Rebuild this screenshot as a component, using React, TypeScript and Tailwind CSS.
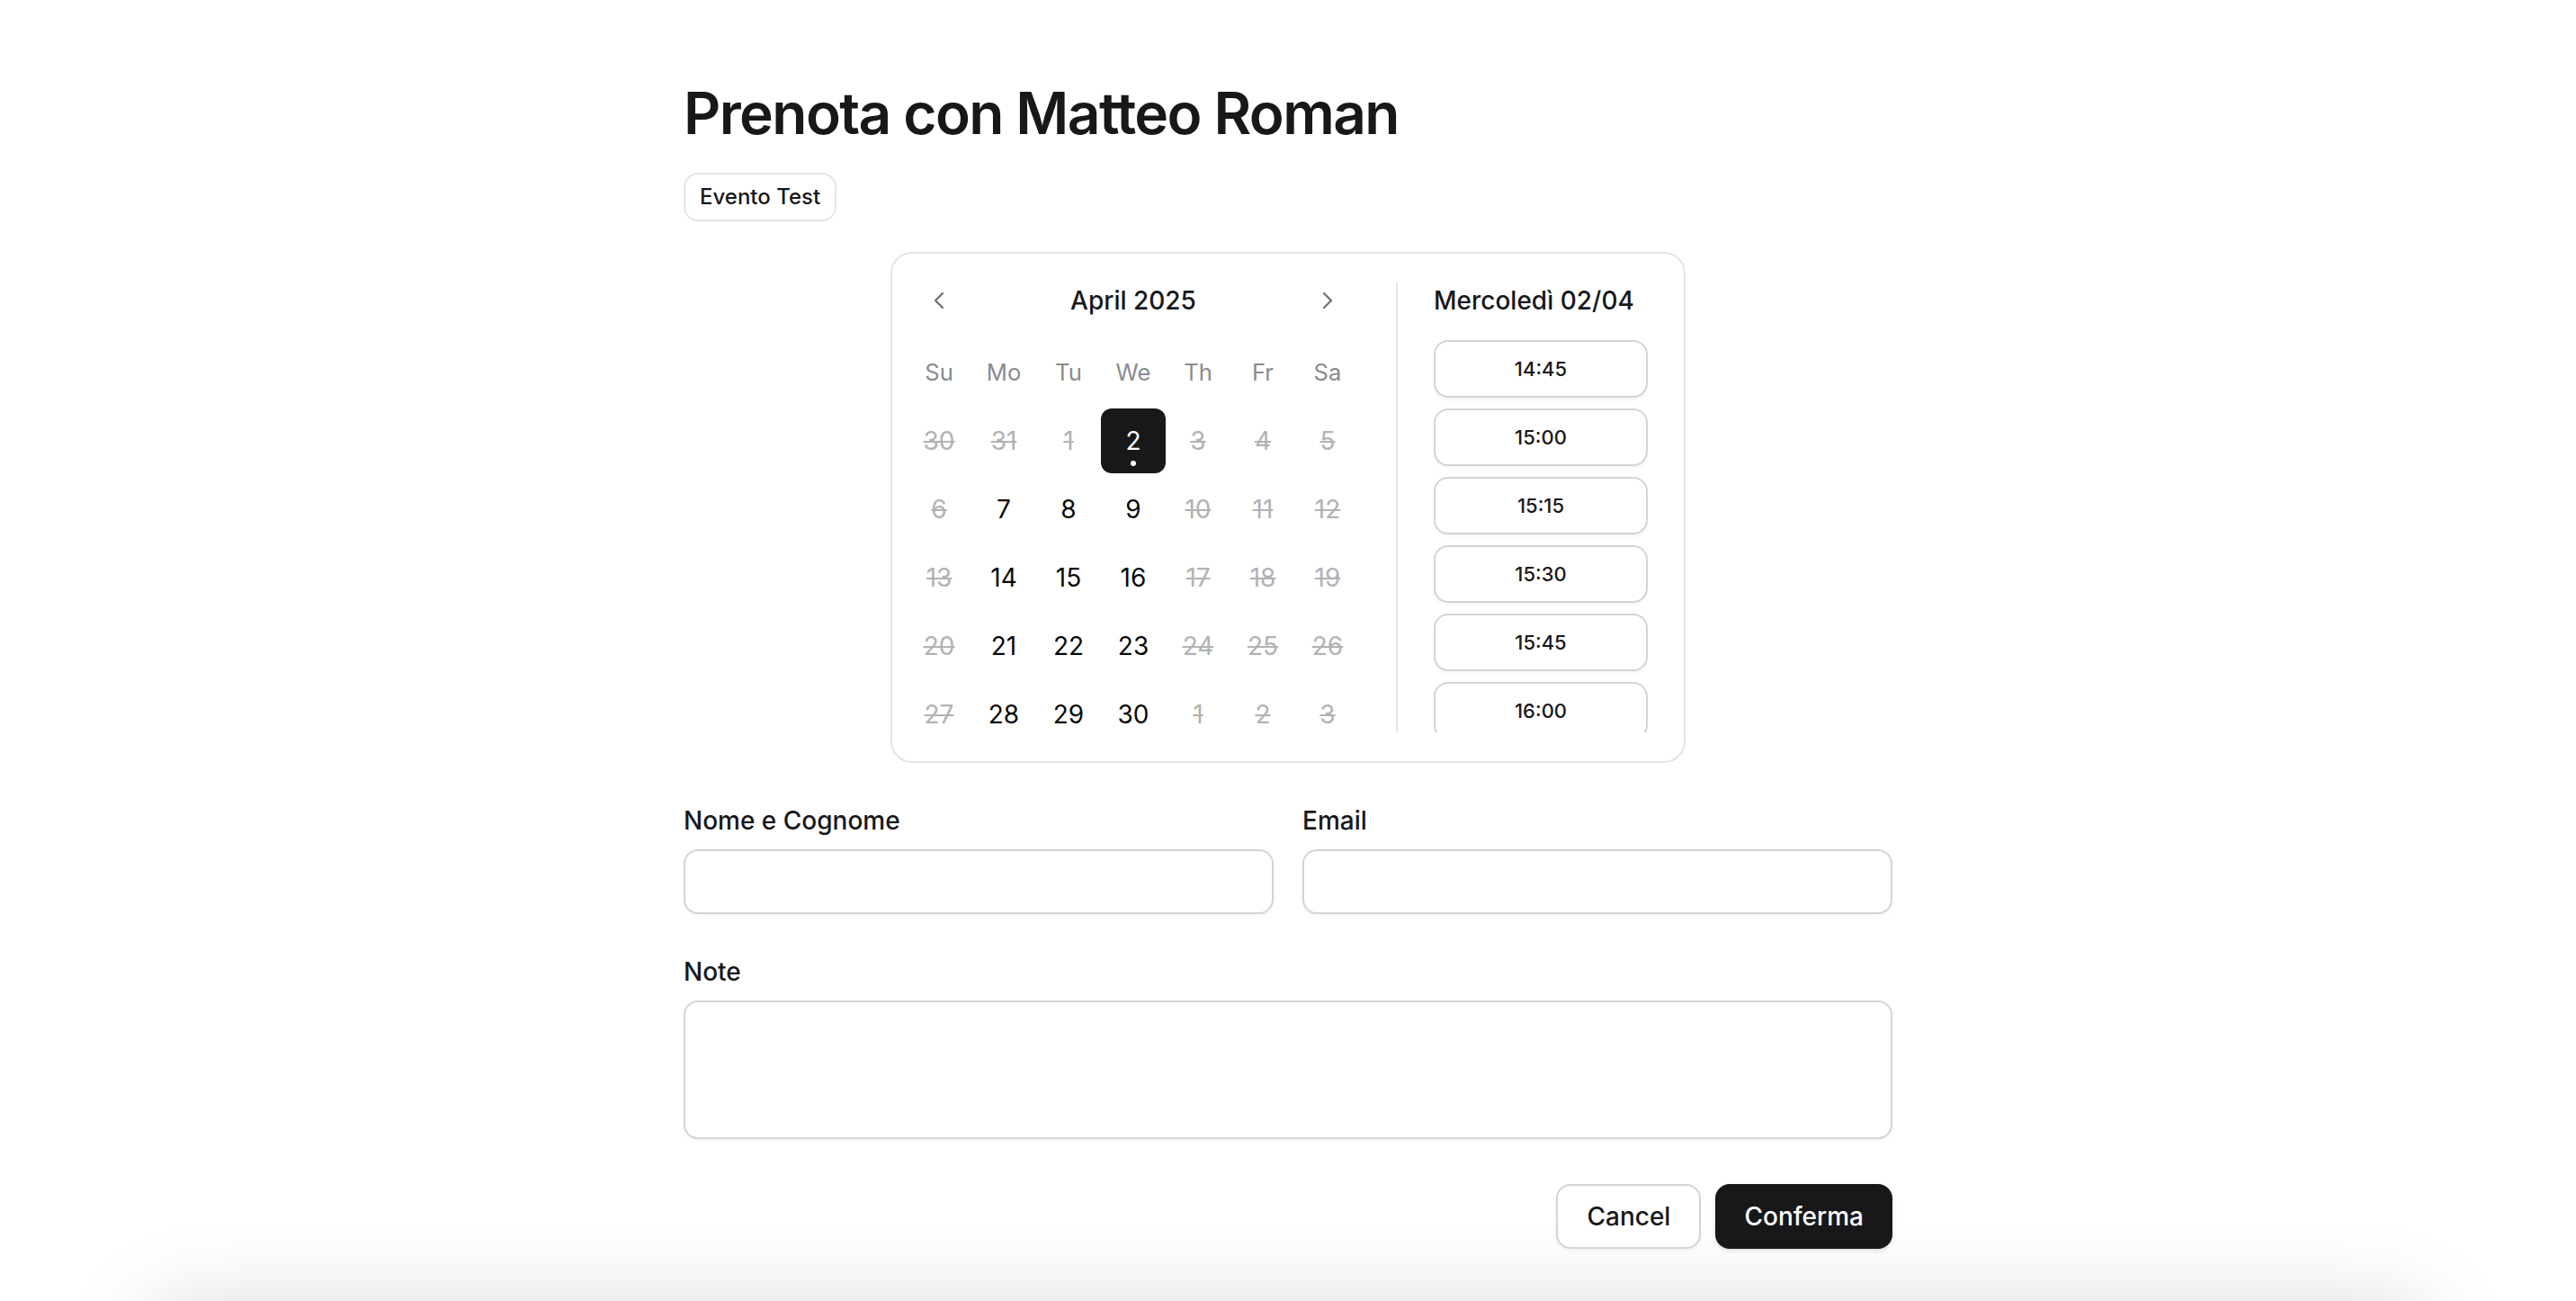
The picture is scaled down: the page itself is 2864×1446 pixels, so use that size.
import { ChevronLeft, ChevronRight } from 'lucide-react';

type Day = { n: number; off?: boolean; selected?: boolean };

const weekdays = ['Su', 'Mo', 'Tu', 'We', 'Th', 'Fr', 'Sa'];

const open = [2, 7, 8, 9, 14, 15, 16, 21, 22, 23, 28, 29, 30];

function buildWeeks(): Day[][] {
  const nums = [30, 31, ...Array.from({ length: 30 }, (_, i) => i + 1), 1, 2, 3];
  const days: Day[] = nums.map((n, i) => {
    const inMonth = i >= 2 && i < 32;
    return { n, off: !inMonth || !open.includes(n), selected: inMonth && n === 2 };
  });
  const weeks: Day[][] = [];
  for (let i = 0; i < days.length; i += 7) weeks.push(days.slice(i, i + 7));
  return weeks;
}

const slots = ['14:45', '15:00', '15:15', '15:30', '15:45', '16:00', '16:15'];

function Calendar() {
  const weeks = buildWeeks();
  return (
    <div className="mr-5 w-[252px]">
      <div className="flex h-9 items-center justify-between">
        <button className="flex size-9 items-center justify-center text-[#71717a]">
          <ChevronLeft className="size-4" strokeWidth={1.75} />
        </button>
        <span className="text-sm font-medium">April 2025</span>
        <button className="flex size-9 items-center justify-center text-[#71717a]">
          <ChevronRight className="size-4" strokeWidth={1.75} />
        </button>
      </div>
      <div className="mt-1 grid grid-cols-7">
        {weekdays.map((d) => (
          <div key={d} className="flex h-9 items-center justify-center text-[0.8rem] text-[#8a8a8f]">
            {d}
          </div>
        ))}
      </div>
      <div className="mt-0.5 flex flex-col gap-0.5">
        {weeks.map((week, wi) => (
          <div key={wi} className="grid grid-cols-7">
            {week.map((d, di) => {
              if (d.selected) {
                return (
                  <div
                    key={di}
                    className="relative flex size-9 items-center justify-center rounded-md bg-[#18181b] text-sm text-white"
                  >
                    {d.n}
                    <span className="absolute bottom-1 left-1/2 size-[3px] -translate-x-1/2 rounded-full bg-white" />
                  </div>
                );
              }
              return (
                <div
                  key={di}
                  className={
                    d.off
                      ? 'flex size-9 items-center justify-center text-sm text-[#b2b2b6] line-through'
                      : 'flex size-9 items-center justify-center text-sm text-[#0a0a0a]'
                  }
                >
                  {d.n}
                </div>
              );
            })}
          </div>
        ))}
      </div>
    </div>
  );
}

export default function App() {
  return (
    <div className="h-[723px] overflow-hidden bg-white font-['Inter',sans-serif] text-[#18181b] [zoom:2]">
      <main className="mx-auto max-w-2xl pt-[43px]">
        <h1 className="text-[32px] leading-10 font-semibold tracking-tight">Prenota con Matteo Roman</h1>
        <div className="mt-[13px] flex">
          <span className="flex h-[27px] items-center rounded-lg border border-[#e4e4e7] px-2 text-xs font-medium">
            Evento Test
          </span>
        </div>

        <div className="mt-[17px] flex justify-center">
          <div className="flex rounded-xl border border-[#e4e4e7] py-2 pr-5 pl-2">
            <Calendar />
            <div className="mt-2 h-[250px] w-px bg-[#e4e4e7]" />
            <div className="mt-2 flex h-[250px] flex-col pl-5">
              <p className="h-5 text-sm leading-5 font-medium">Mercoledì 02/04</p>
              <div className="mt-3 flex min-h-0 flex-1 flex-col gap-1.5 overflow-hidden">
                {slots.map((s) => (
                  <button
                    key={s}
                    className="h-8 w-[119px] shrink-0 rounded-lg border border-[#d4d4d8] bg-white text-[11px] font-medium shadow-xs"
                  >
                    {s}
                  </button>
                ))}
              </div>
            </div>
          </div>
        </div>

        <div className="mt-[22px] grid grid-cols-2 gap-4">
          <div className="flex flex-col gap-1.5">
            <label className="text-sm leading-5 font-medium">Nome e Cognome</label>
            <input className="h-9 rounded-lg border border-[#d4d4d8] bg-white px-3 text-sm shadow-xs outline-none" />
          </div>
          <div className="flex flex-col gap-1.5">
            <label className="text-sm leading-5 font-medium">Email</label>
            <input className="h-9 rounded-lg border border-[#d4d4d8] bg-white px-3 text-sm shadow-xs outline-none" />
          </div>
        </div>

        <div className="mt-[22px] flex flex-col gap-1.5">
          <label className="text-sm leading-5 font-medium">Note</label>
          <textarea className="h-[77px] resize-none rounded-lg border border-[#d4d4d8] bg-white px-3 py-2 text-sm shadow-xs outline-none" />
        </div>

        <div className="mt-[25px] flex justify-end gap-2">
          <button className="h-9 rounded-lg border border-[#d4d4d8] bg-white px-4 text-sm font-medium shadow-xs">
            Cancel
          </button>
          <button className="h-9 rounded-lg bg-[#18181b] px-4 text-sm font-medium text-white shadow-sm">
            Conferma
          </button>
        </div>
      </main>

      <div className="mx-[84px] mt-[34px] h-40 rounded-2xl bg-white shadow-[0_0_50px_rgba(0,0,0,0.17)]" />
    </div>
  );
}
